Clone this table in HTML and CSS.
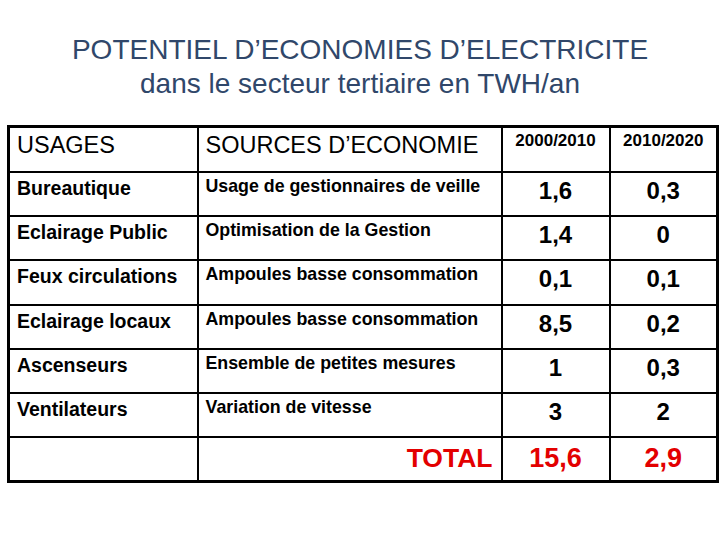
FILE: index.html
```html
<!DOCTYPE html>
<html lang="fr">
<head>
<meta charset="utf-8">
<title>Potentiel d'économies d'électricité</title>
<link rel="stylesheet" href="styles.css">
</head>
<body>
<div class="slide">
  <h1 class="title">
    <span class="title-line">POTENTIEL D’ECONOMIES D’ELECTRICITE</span>
    <span class="title-line">dans le secteur tertiaire en TWH/an</span>
  </h1>
  <table class="grid">
    <colgroup>
      <col class="c-usage">
      <col class="c-source">
      <col class="c-num">
      <col class="c-num">
    </colgroup>
    <thead>
      <tr class="head-row">
        <th class="h-big">USAGES</th>
        <th class="h-big">SOURCES D’ECONOMIE</th>
        <th class="h-year">2000/2010</th>
        <th class="h-year">2010/2020</th>
      </tr>
    </thead>
    <tbody>
      <tr class="row">
        <td class="usage">Bureautique</td>
        <td class="source">Usage de gestionnaires de veille</td>
        <td class="num">1,6</td>
        <td class="num">0,3</td>
      </tr>
      <tr class="row">
        <td class="usage">Eclairage Public</td>
        <td class="source">Optimisation de la Gestion</td>
        <td class="num">1,4</td>
        <td class="num">0</td>
      </tr>
      <tr class="row">
        <td class="usage">Feux circulations</td>
        <td class="source">Ampoules basse consommation</td>
        <td class="num">0,1</td>
        <td class="num">0,1</td>
      </tr>
      <tr class="row">
        <td class="usage">Eclairage locaux</td>
        <td class="source">Ampoules basse consommation</td>
        <td class="num">8,5</td>
        <td class="num">0,2</td>
      </tr>
      <tr class="row">
        <td class="usage">Ascenseurs</td>
        <td class="source">Ensemble de petites mesures</td>
        <td class="num">1</td>
        <td class="num">0,3</td>
      </tr>
      <tr class="row">
        <td class="usage">Ventilateurs</td>
        <td class="source">Variation de vitesse</td>
        <td class="num">3</td>
        <td class="num">2</td>
      </tr>
      <tr class="row total-row">
        <td class="usage"></td>
        <td class="total-label">TOTAL</td>
        <td class="total">15,6</td>
        <td class="total">2,9</td>
      </tr>
    </tbody>
  </table>
</div>
</body>
</html>
```

FILE: styles.css
```css
html, body {
  margin: 0;
  padding: 0;
  background: #ffffff;
}

.slide {
  width: 720px;
  height: 540px;
  font-family: "Liberation Sans", Arial, sans-serif;
  color: #000;
}

.title {
  margin: 0;
  padding-top: 33px;
  font-weight: normal;
  font-size: 28px;
  line-height: 34px;
  color: #30476a;
  text-align: center;
  display: flex;
  flex-direction: column;
  align-items: center;
}

.grid {
  margin: 24px 0 0 7px;
  width: 708px;
  border-collapse: collapse;
  table-layout: fixed;
  border: 3px solid #000;
}

.c-usage { width: 189px; }
.c-source { width: 304px; }
.c-num { width: 108px; }

.grid th,
.grid td {
  border: 2px solid #000;
  padding: 0 0 0 7px;
  vertical-align: top;
  text-align: left;
}

.head-row { height: 45.5px; }
.row { height: 44.2px; }

.h-big {
  font-weight: normal;
  font-size: 23.5px;
  line-height: 28px;
  padding-top: 3px !important;
}

.h-year {
  font-weight: bold;
  font-size: 17px;
  line-height: 20px;
  padding-top: 3px !important;
  text-align: center !important;
  padding-left: 0 !important;
}

.usage {
  font-weight: bold;
  font-size: 19.5px;
  line-height: 24px;
  padding-top: 3px !important;
}

.source {
  font-weight: bold;
  font-size: 17.8px;
  line-height: 22px;
  padding-top: 2px !important;
}

.num {
  font-weight: bold;
  font-size: 24px;
  line-height: 28px;
  padding-top: 4px !important;
  padding-left: 0 !important;
  text-align: center !important;
}

.total-label {
  color: #e30000;
  font-weight: bold;
  font-size: 26.5px;
  line-height: 31px;
  padding-top: 5px !important;
  padding-right: 8px !important;
  text-align: right !important;
}

.total {
  color: #e30000;
  font-weight: bold;
  font-size: 27px;
  line-height: 31px;
  padding-top: 5px !important;
  padding-left: 0 !important;
  text-align: center !important;
}
```
